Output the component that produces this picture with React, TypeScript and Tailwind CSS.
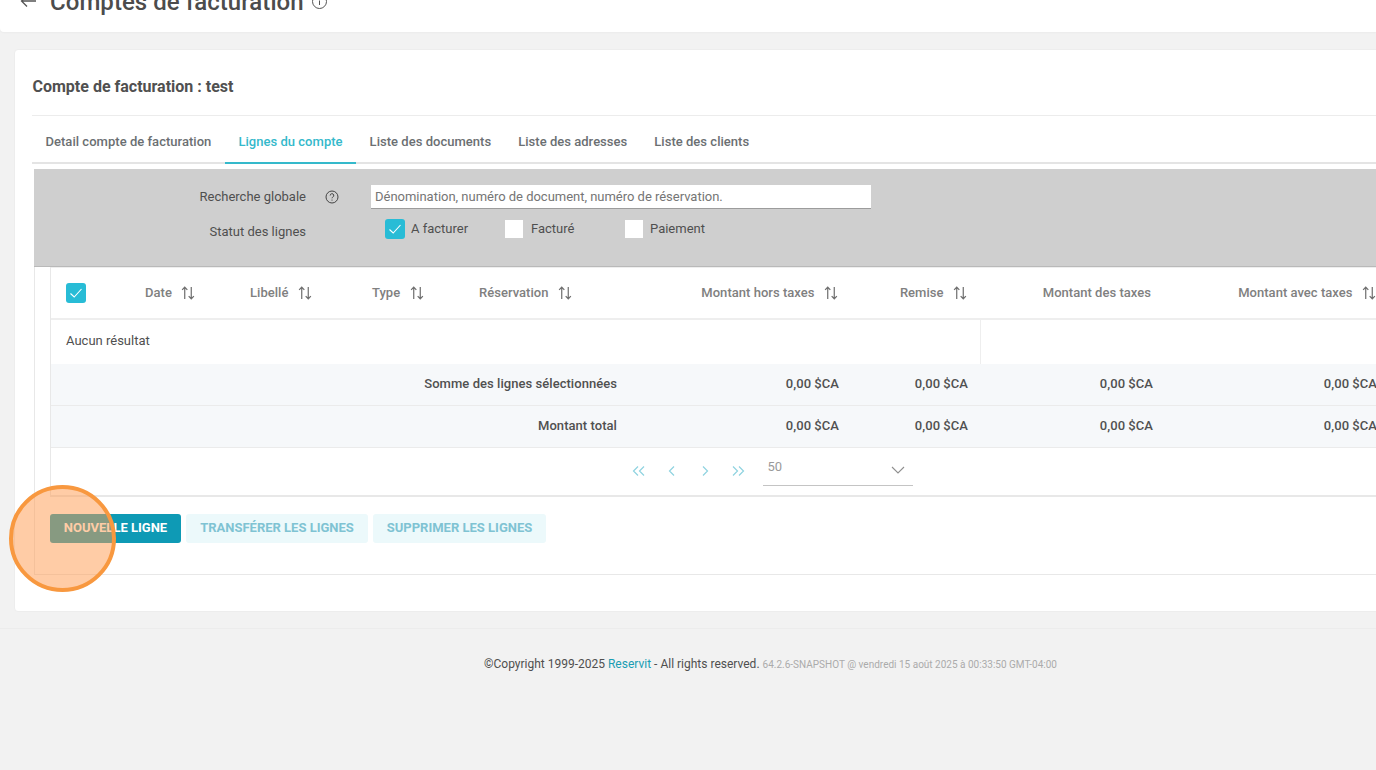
import React from "react";

const Sort = () => (
  <svg width="14" height="16" viewBox="0 0 15 16" fill="none" stroke="currentColor" strokeWidth="1.3" className="text-[#6f6f6f] shrink-0">
    <path d="M4 14.5V1.8M1.2 4.6 4 1.8l2.8 2.8" />
    <path d="M11 1.5v12.7M8.2 11.4l2.8 2.8 2.8-2.8" />
  </svg>
);

const Check = ({ on, size = "w-5 h-5" }: { on: boolean; size?: string }) => (
  <span className={`${size} flex items-center justify-center shrink-0 ${on ? "bg-[#28bcd6] rounded-[3px]" : "bg-white"}`}>
    {on && (
      <svg width="14" height="14" viewBox="0 0 14 14" fill="none" stroke="white" strokeWidth="1.1">
        <path d="M1.5 7.5 5.2 11 12.5 3" />
      </svg>
    )}
  </span>
);

const Head = ({ label, w, right, sort = true }: { label: string; w: string; right?: boolean; sort?: boolean }) => (
  <div className={`${w} shrink-0 flex items-center gap-[9.5px] ${right ? "justify-end" : ""}`}>
    <span>{label}</span>
    {sort && <Sort />}
  </div>
);

const SumRow = ({ label }: { label: string }) => (
  <div className="flex items-center h-[42px] pb-[2px] bg-[#f6f8fa] text-[13px] font-medium tracking-[0.05px] text-[#505050] border-b border-[#ebebeb]">
    <div className="w-[566px] shrink-0 text-right">{label}</div>
    <div className="w-[222px] shrink-0 text-right">0,00 $CA</div>
    <div className="w-[129px] shrink-0 text-right">0,00 $CA</div>
    <div className="w-[185px] shrink-0 text-right">0,00 $CA</div>
    <div className="w-[224px] shrink-0 text-right">0,00 $CA</div>
  </div>
);

const Chevron = ({ d }: { d: string }) => (
  <svg width="14" height="12" viewBox="0 0 14 12" fill="none" stroke="#8fd3e0" strokeWidth="1.2">
    <path d={d} />
  </svg>
);

export default function App() {
  return (
    <div className="relative h-[770px] w-[1376px] overflow-hidden bg-[#f2f2f2] font-['Roboto',sans-serif]">
      {/* top bar, partly scrolled off */}
      <header className="h-[32px] bg-white rounded-bl-[4px] overflow-hidden shadow-[0_1px_2px_rgba(0,0,0,0.03)]">
        <div className="flex items-center pl-[20px] -mt-[13px] h-[30px]">
          <svg width="17" height="14" viewBox="0 0 17 14" fill="none" stroke="#555555" strokeWidth="1.3" className="-mt-[3px]">
            <path d="M16 7H1.5M7 1.5 1.5 7 7 12.5" />
          </svg>
          <span className="ml-[13px] text-[24px] leading-[30px] font-medium tracking-[0.05px] text-[#4c4c4c]">Comptes de facturation</span>
          <svg width="17" height="17" viewBox="0 0 17 17" fill="none" stroke="#555555" strokeWidth="1" className="ml-[7px] -mt-[2px]">
            <circle cx="8.5" cy="8.5" r="7" />
            <path d="M8.5 7.5v4.5M8.5 4.5v1.3" />
          </svg>
        </div>
      </header>

      {/* main card */}
      <main className="ml-[14px] mt-[17px] h-[563px] w-[1400px] bg-white rounded-[4px] border border-[#ededed] pl-[17px]">
        <div className="h-[66px] border-b border-[#ececec] flex items-center pt-[8px]">
          <h1 className="text-[16px] font-bold text-[#505050] pl-[0.5px]">Compte de facturation : test</h1>
        </div>

        {/* tabs */}
        <nav className="h-[48px] flex border-b-2 border-[#e4e4e4] text-[13px] font-medium tracking-[0.03px] text-[#6b6f72]">
          <div className="pl-[13.5px] pr-[13.5px] h-[48px] flex items-center pt-[3px]">Detail compte de facturation</div>
          <div className="px-[13.5px] h-[48px] flex items-center pt-[5px] text-[#35b9cb] border-b-2 border-[#35b9cb]">Lignes du compte</div>
          <div className="px-[13.5px] h-[48px] flex items-center pt-[3px]">Liste des documents</div>
          <div className="px-[13.5px] h-[48px] flex items-center pt-[3px]">Liste des adresses</div>
          <div className="px-[13.5px] h-[48px] flex items-center pt-[3px]">Liste des clients</div>
        </nav>

        {/* filters */}
        <section className="mt-[5px] ml-[2px] h-[98px] bg-[#cfcfcf] border-b border-[#b9b9b9] text-[13px] text-[#4f4f4f] pt-[16px]">
          <div className="flex items-center h-[24px]">
            <div className="w-[272px] text-right -mt-[1px]">Recherche globale</div>
            <svg width="14" height="14" viewBox="0 0 14 14" fill="none" stroke="#444444" strokeWidth="1" className="ml-[19px]">
              <circle cx="7" cy="7" r="6" />
              <path d="M5.2 5.5a1.8 1.8 0 1 1 2.6 1.6c-.6.3-.8.6-.8 1.2M7 9.6v1" />
            </svg>
            <div className="ml-[32px] w-[500px] h-[24px] bg-white border-b border-[#9c9c9c] pl-[4px] flex items-center text-[#757575] tracking-[-0.02px]">
              Dénomination, numéro de document, numéro de réservation.
            </div>
          </div>
          <div className="flex items-start mt-[10px] h-[24px]">
            <div className="w-[272px] text-right mt-[3px]">Statut des lignes</div>
            <div className="ml-[79px] flex items-center">
              <Check on />
              <span className="ml-[6px] w-[94px]">A facturer</span>
              <Check on={false} size="w-[18px] h-[18px]" />
              <span className="ml-[8px] w-[94px]">Facturé</span>
              <Check on={false} size="w-[18px] h-[18px]" />
              <span className="ml-[7px]">Paiement</span>
            </div>
          </div>
        </section>

        {/* table area */}
        <section className="ml-[2px] h-[308px] border-l border-b border-[#e8e8e8] pl-[15px]">
          <div className="h-[230px] border-l border-b-2 border-[#e8e8e8]">
            <div className="h-[53px] pb-[1px] flex items-center border-t border-b-2 border-t-[#eeeeee] border-b-[#eeeeee] text-[13px] font-medium tracking-[0.03px] text-[#808080]">
              <div className="w-[94px] shrink-0 pl-[15px]"><Check on /></div>
              <Head label="Date" w="w-[105px]" />
              <Head label="Libellé" w="w-[122px]" />
              <Head label="Type" w="w-[107px]" />
              <Head label="Réservation" w="w-[120px]" />
              <Head label="Montant hors taxes" w="w-[239px]" right />
              <Head label="Remise" w="w-[129px]" right />
              <Head label="Montant des taxes" w="w-[184px]" right sort={false} />
              <Head label="Montant avec taxes" w="w-[225px]" right />
            </div>
            <div className="h-[44px] w-[930px] flex items-center pl-[15px] pb-[2px] text-[13px] text-[#4f4f4f] border-r border-[#eeeeee]">
              Aucun résultat
            </div>
            <SumRow label="Somme des lignes sélectionnées" />
            <SumRow label="Montant total" />
            <div className="h-[47px] flex items-start">
              <div className="ml-[581px] flex items-center gap-[19px] mt-[17px]">
                <Chevron d="M6 1.5 1.5 6 6 10.5M12 1.5 7.5 6 12 10.5" />
                <Chevron d="M9 1.5 4.5 6 9 10.5" />
                <Chevron d="M5 1.5 9.5 6 5 10.5" />
                <Chevron d="M2 1.5 6.5 6 2 10.5M8 1.5 12.5 6 8 10.5" />
              </div>
              <div className="ml-[17.5px] w-[150px] h-[38px] border-b border-[#c4c4c4] flex items-start justify-between pl-[5px] pr-[8px] text-[13px] text-[#9a9a9a] pt-[9px]">
                <span>50</span>
                <svg width="14" height="8" viewBox="0 0 14 8" fill="none" stroke="#8f8f8f" strokeWidth="1.1" className="mt-[9px]">
                  <path d="M1 1l6 6 6-6" />
                </svg>
              </div>
            </div>
          </div>

          <div className="mt-[17px] flex gap-[5px] text-[13px] font-bold">
            <button className="w-[131px] h-[29px] pb-[2px] rounded-[3px] bg-[#0e9ab5] text-white uppercase">Nouvelle ligne</button>
            <button className="w-[182px] h-[29px] pb-[2px] rounded-[3px] bg-[#ecf9fb] text-[#7fc3d3] uppercase">Transférer les lignes</button>
            <button className="w-[173px] h-[29px] pb-[2px] rounded-[3px] bg-[#ecf9fb] text-[#7fc3d3] uppercase">Supprimer les lignes</button>
          </div>
        </section>
      </main>

      {/* footer */}
      <footer className="mt-[16px] border-t border-[#ececec] pt-[26px] pl-[165px] flex justify-center items-baseline text-[12px] text-[#4f4f4f]">
        <span>©Copyright 1999-2025 <span className="text-[#1a9db3]">Reservit</span> - All rights reserved.</span>
        <span className="ml-[3px] text-[10px] text-[#ababab]">64.2.6-SNAPSHOT @ vendredi 15 août 2025 à 00:33:50 GMT-04:00</span>
      </footer>

      {/* highlight circle */}
      <div className="absolute left-[9px] top-[485px] w-[107px] h-[107px] rounded-full border-[4px] border-[#f8983f] bg-[#ff9a4d]/50" />
    </div>
  );
}
